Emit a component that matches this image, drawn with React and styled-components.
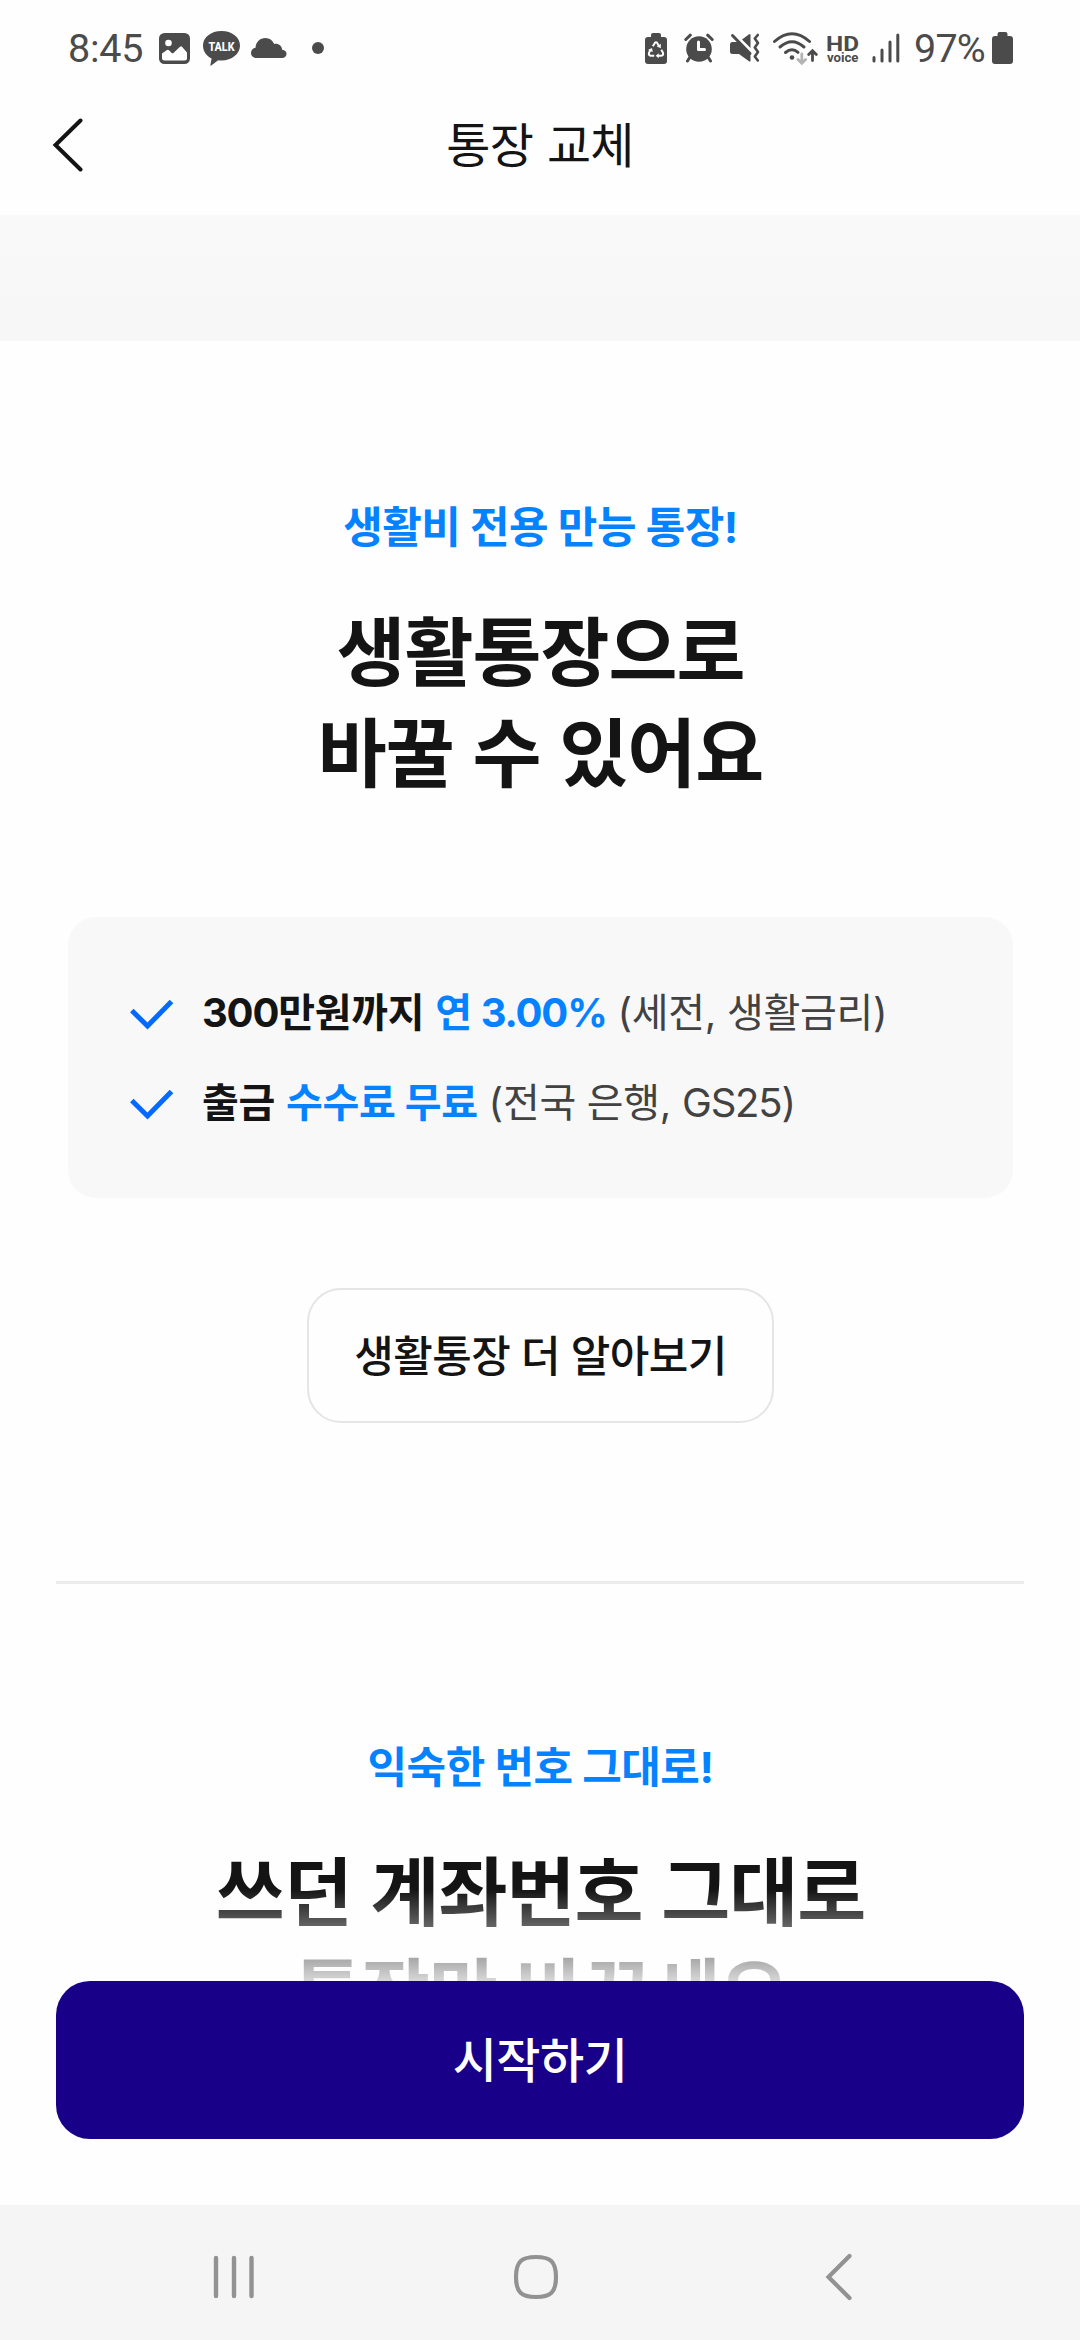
import styled, { createGlobalStyle, ThemeProvider } from "styled-components";

const theme = {
  colors: {
    text: "#141414",
    subText: "#424242",
    status: "#4b4b4b",
    blue: "#0582ff",
    check: "#0469ff",
    navy: "#180088",
    surface: "#f8f8f8",
    navBar: "#f5f5f5",
    navIcon: "#929292",
    border: "#e5e5e5",
    divider: "#ececec",
  },
};

const StatusIcons = () => (
  <StatusBar>
    <StatusGroup>
      <Clock>8:45</Clock>
      <StatusSvg $gap={18} width="31" height="31" viewBox="0 0 31 31">
        <rect width="31" height="31" rx="5.5" />
        <circle cx="9.5" cy="10" r="3.3" fill="#fff" />
        <path
          d="M3 20.5l5-3.5q1-.5 2 .3l2.700 2.700q1 .8 2-.2l6.300-6q1.200-1 2.200.200l4.800 5.500V25q0 2.500-2.500 2.500h-20Q3 27.500 3 25z"
          fill="#fff"
        />
      </StatusSvg>
      <StatusSvg $gap={13} width="37" height="35" viewBox="0 0 37 35">
        <path d="M18.500 0C29 0 37 6.200 37 14.500S29 29.500 18.500 29.500q-1.800 0-3.300-.3L8.200 34.600q-1 .5-.8-.6l1.200-6.500C3.500 25 0 20.500 0 14.500 0 6.200 8 0 18.500 0z" />
        <TalkText x="18.500" y="19.800" textLength="26" lengthAdjust="spacingAndGlyphs">
          TALK
        </TalkText>
      </StatusSvg>
      <StatusSvg $gap={11} width="36" height="20" viewBox="0 0 36 20">
        <path d="M5.500 20C2.500 20 0 18 0 15c0-3 2-4.800 4.500-5.200C4.800 4 9 0 14.500 0c4 0 7 2.200 8.700 6 4-.8 7.600 1.600 8 5.800 2.600.2 4.300 1.800 4.300 4 0 2.500-1.800 4.200-4.300 4.200z" />
      </StatusSvg>
      <Dot />
    </StatusGroup>
    <StatusGroup>
      <StatusSvg width="22" height="31" viewBox="0 0 22 31">
        <path d="M6 4V2q0-2 2-2h6q2 0 2 2v2h3q3 0 3 3v21q0 3-3 3H3q-3 0-3-3V7q0-3 3-3z" />
        <g fill="none" stroke="#fff" strokeWidth="2">
          <path d="M7.800 13.200L9.700 10.200q1.300-1.700 2.600 0l1.900 3.200" />
          <path d="M16.300 16.800l1.600 2.800q1 2.800-1.700 3.200H12.500" />
          <path d="M9.200 22.800H5.800q-2.700-.4-1.700-3.200l1.700-3" />
        </g>
        <g fill="#fff">
          <path d="M15.800 10.800v4.400l-4-1.800z" />
          <path d="M13.700 20.300v5l-3-2.500z" />
          <path d="M3 17l4-2 .8 4z" />
        </g>
      </StatusSvg>
      <StatusSvg $gap={17} width="30" height="30" viewBox="0 0 30 30">
        <circle cx="15" cy="16" r="12.800" />
        <g fill="none" stroke="#4b4b4b" strokeWidth="3" strokeLinecap="round">
          <path d="M1.800 6.500l4.500-4.300M28.200 6.500l-4.500-4.300M6 24l-2.500 4M24 24l2.500 4" />
        </g>
        <path d="M14.500 9v7.500h6" fill="none" stroke="#fff" strokeWidth="3" strokeLinecap="round" strokeLinejoin="round" />
      </StatusSvg>
      <StatusSvg $gap={16} width="30" height="30" viewBox="0 0 30 30">
        <path d="M2.500 9h6l12 12.500v6.300q-.3 1.400-1.500.5L9 21H2.500Q0 21 0 18.500v-7Q0 9 2.500 9z" />
        <path d="M12 6.500L18.800 1.500q1.700-1 1.700.5v13z" />
        <path d="M2.500 2.500l17.500 18" fill="none" stroke="#4b4b4b" strokeWidth="3" strokeLinecap="round" />
        <path
          d="M27.800 2l-3 3.500 3.200 4.500-3.200 4.500 3.200 4.500-3.200 4.500 3 4"
          fill="none"
          stroke="#4b4b4b"
          strokeWidth="2.600"
          strokeLinecap="round"
          strokeLinejoin="round"
        />
      </StatusSvg>
      <StatusSvg $gap={13} width="45" height="33" viewBox="0 0 45 33">
        <g fill="none" stroke="#4b4b4b" strokeWidth="3" strokeLinecap="round">
          <path d="M1.500 9.500q17.500-15.500 35 0" />
          <path d="M7 15q12-10.500 24 0" />
          <path d="M12.500 20.500q6.500-5.500 12.500-.2" />
        </g>
        <circle cx="19" cy="25.500" r="2.300" />
        <path d="M28.800 22v9M25 27.500l3.800 3.800 3.800-3.800" fill="none" stroke="#b4b4b4" strokeWidth="2.800" strokeLinecap="round" />
        <path d="M39.500 28.500v-9M35.700 22.500l3.800-3.800 3.800 3.800" fill="none" stroke="#4b4b4b" strokeWidth="2.800" strokeLinecap="round" />
      </StatusSvg>
      <HdVoice width="34" height="33" viewBox="0 0 34 33">
        <text x="0" y="18.500" fontSize="20" textLength="33" lengthAdjust="spacingAndGlyphs">
          HD
        </text>
        <text x="1" y="29.500" fontSize="12.500" textLength="31.500" lengthAdjust="spacingAndGlyphs">
          voice
        </text>
      </HdVoice>
      <StatusSvg $gap={12} width="28" height="30" viewBox="0 0 28 30">
        <g fill="none" stroke="#4b4b4b" strokeWidth="3" strokeLinecap="round">
          <path d="M2 24.500v3.500M10 17v11M18 9v19M25.800 2v26" />
        </g>
      </StatusSvg>
      <Percent>97%</Percent>
      <StatusSvg $gap={7} width="21" height="32" viewBox="0 0 21 32">
        <path d="M5.500 4V2q0-2 2-2h6q2 0 2 2v2h2.500q3 0 3 3v22q0 3-3 3H3q-3 0-3-3V7q0-3 3-3z" />
      </StatusSvg>
    </StatusGroup>
  </StatusBar>
);

const Benefit = ({ children }) => (
  <BenefitRow>
    <CheckIcon width="44" height="31" viewBox="0 0 44 31">
      <path d="M1.800 11.500L17.500 27 41.500 2.500" fill="none" stroke={theme.colors.check} strokeWidth="5" />
    </CheckIcon>
    <BenefitText>{children}</BenefitText>
  </BenefitRow>
);

const App = () => (
  <ThemeProvider theme={theme}>
    <GlobalStyle />
    <Screen>
      <StatusIcons />
      <Header>
        <BackButton aria-label="뒤로">
          <svg width="32" height="54" viewBox="0 0 32 54">
            <path d="M28.500 2.500L3.500 27l25 24.500" fill="none" stroke="#141414" strokeWidth="4" strokeLinecap="round" />
          </svg>
        </BackButton>
        <HeaderTitle>통장 교체</HeaderTitle>
      </Header>
      <Content>
        <Band />
        <Section>
          <Eyebrow>생활비 전용 만능 통장!</Eyebrow>
          <Title>
            생활통장으로
            <br />
            바꿀 수 있어요
          </Title>
          <Card>
            <Benefit>
              <strong>
                <Latin>300</Latin>만원까지
              </strong>{" "}
              <Point>
                연 <Latin>3.00%</Latin>
              </Point>{" "}
              (세전, 생활금리)
            </Benefit>
            <Benefit>
              <strong>출금</strong> <Point>수수료 무료</Point> (전국 은행, <Latin>GS25)</Latin>
            </Benefit>
          </Card>
          <MoreButton>생활통장 더 알아보기</MoreButton>
        </Section>
        <Divider />
        <Section $top={153}>
          <Eyebrow>익숙한 번호 그대로!</Eyebrow>
          <Title>
            쓰던 계좌번호 그대로
            <br />
            통장만 바꾸세요
          </Title>
        </Section>
      </Content>
      <Footer>
        <Fade />
        <StartButton>시작하기</StartButton>
      </Footer>
      <NavBar>
        <svg width="44" height="46" viewBox="0 0 44 46">
          <path d="M4 4v38M22 4v38M39.500 4v38" fill="none" stroke="#929292" strokeWidth="4.400" strokeLinecap="round" />
        </svg>
        <svg width="46" height="46" viewBox="0 0 46 46">
          <path
            d="M23 3C37 3 43 7 43 23S37 43 23 43 3 39 3 23 9 3 23 3z"
            fill="none"
            stroke="#929292"
            strokeWidth="4.200"
          />
        </svg>
        <svg width="28" height="48" viewBox="0 0 28 48">
          <path d="M24.500 3L3.500 24l21 21" fill="none" stroke="#929292" strokeWidth="4.200" strokeLinecap="round" />
        </svg>
      </NavBar>
    </Screen>
  </ThemeProvider>
);

const GlobalStyle = createGlobalStyle`
  * {
    box-sizing: border-box;
  }

  body {
    margin: 0;
    background: #fff;
    font-family: Inter, "Noto Sans CJK KR", sans-serif;
  }

  button {
    padding: 0;
    border: 0;
    background: none;
    font-family: inherit;
  }

  svg {
    display: block;
    flex-shrink: 0;
  }
`;

const Screen = styled.div`
  display: flex;
  flex-direction: column;
  width: 1080px;
  height: 2340px;
  overflow: hidden;
  color: ${({ theme }) => theme.colors.text};
  background: #fefefe;
`;

const StatusBar = styled.div`
  display: flex;
  justify-content: space-between;
  align-items: center;
  height: 96px;
  padding: 0 67px 0 68px;
  flex-shrink: 0;
  color: ${({ theme }) => theme.colors.status};
  font-family: Roboto, sans-serif;
`;

const StatusGroup = styled.div`
  display: flex;
  align-items: center;
`;

const StatusSvg = styled.svg`
  margin-left: ${({ $gap }) => $gap || 0}px;
  fill: ${({ theme }) => theme.colors.status};
`;

const TalkText = styled.text`
  fill: #fff;
  font-family: Roboto, sans-serif;
  font-size: 13px;
  font-weight: 800;
  text-anchor: middle;
`;

const HdVoice = styled.svg`
  margin-left: 8px;
  fill: ${({ theme }) => theme.colors.status};
  font-family: Roboto, sans-serif;
  font-weight: 700;
`;

const Clock = styled.span`
  width: 73px;
  font-size: 39.5px;
  letter-spacing: -0.2px;
  white-space: nowrap;
`;

const Percent = styled.span`
  width: 71px;
  margin-left: 14px;
  font-size: 39.5px;
  letter-spacing: -0.8px;
  white-space: nowrap;
`;

const Dot = styled.i`
  width: 12px;
  height: 12px;
  margin-left: 25px;
  border-radius: 50%;
  background: ${({ theme }) => theme.colors.status};
`;

const Header = styled.header`
  display: grid;
  grid-template-columns: 120px 1fr 120px;
  align-items: center;
  height: 119px;
  padding-bottom: 22px;
  flex-shrink: 0;
`;

const BackButton = styled.button`
  padding-left: 52px;
`;

const HeaderTitle = styled.h1`
  margin: 0;
  padding-top: 3px;
  font-size: 48px;
  font-weight: 400;
  line-height: 60px;
  letter-spacing: -0.7px;
  word-spacing: 1px;
  text-align: center;
`;

const Content = styled.main`
  flex: 1;
  min-height: 0;
  overflow: hidden;
`;

const Band = styled.div`
  height: 126px;
  background: linear-gradient(#f9f9f9, #f7f7f7);
`;

const Section = styled.section`
  display: flex;
  flex-direction: column;
  align-items: center;
  padding: ${({ $top }) => $top || 156}px 67px 158px 68px;
`;

const Eyebrow = styled.p`
  margin: 0;
  color: ${({ theme }) => theme.colors.blue};
  font-size: 43px;
  font-weight: 700;
  line-height: 60px;
  letter-spacing: -0.5px;
  white-space: nowrap;
`;

const Title = styled.h2`
  margin: 45px 0 0;
  font-size: 75px;
  font-weight: 700;
  line-height: 101px;
  letter-spacing: -1px;
  word-spacing: 2px;
  text-align: center;
  white-space: nowrap;
`;

const Card = styled.div`
  display: flex;
  flex-direction: column;
  gap: 30px;
  width: 100%;
  height: 281px;
  margin-top: 113px;
  padding: 66px 62px;
  border-radius: 28px;
  background: ${({ theme }) => theme.colors.surface};
`;

const BenefitRow = styled.div`
  display: flex;
  align-items: center;
  gap: 28px;
  height: 60px;
`;

const CheckIcon = styled.svg`
  margin-top: 3px;
`;

const BenefitText = styled.p`
  margin: 0;
  color: ${({ theme }) => theme.colors.subText};
  font-size: 40px;
  line-height: 60px;
  letter-spacing: -0.3px;
  white-space: nowrap;

  strong {
    color: ${({ theme }) => theme.colors.text};
    font-weight: 700;
  }
`;

const Point = styled.b`
  color: ${({ theme }) => theme.colors.blue};
  font-weight: 700;
`;

// Inter runs wider than the hangul beside it
const Latin = styled.span`
  letter-spacing: -1.2px;
`;

const MoreButton = styled.button`
  width: 467px;
  height: 135px;
  margin-top: 90px;
  padding-bottom: 5px;
  border: 2px solid ${({ theme }) => theme.colors.border};
  border-radius: 34px;
  color: ${({ theme }) => theme.colors.text};
  font-size: 43px;
  font-weight: 500;
  letter-spacing: -0.6px;
  white-space: nowrap;
`;

const Divider = styled.hr`
  height: 3px;
  margin: 0 56px;
  border: 0;
  background: ${({ theme }) => theme.colors.divider};
`;

const Footer = styled.footer`
  position: relative;
  height: 224px;
  padding: 0 56px;
  flex-shrink: 0;
`;

// fades the scrolling content out above the button
const Fade = styled.div`
  position: absolute;
  left: 0;
  right: 0;
  top: -92px;
  height: 110px;
  background: linear-gradient(rgba(254, 254, 254, 0), #fefefe);
`;

const StartButton = styled.button`
  position: relative;
  width: 100%;
  height: 158px;
  padding-bottom: 7px;
  border-radius: 34px;
  color: #fff;
  background: ${({ theme }) => theme.colors.navy};
  font-size: 48px;
  font-weight: 500;
  letter-spacing: -0.5px;
`;

const NavBar = styled.nav`
  display: grid;
  grid-template-columns: 301px 312px 1fr;
  align-items: center;
  height: 135px;
  padding: 9px 0 0 212px;
  flex-shrink: 0;
  background: ${({ theme }) => theme.colors.navBar};
`;

export default App;
